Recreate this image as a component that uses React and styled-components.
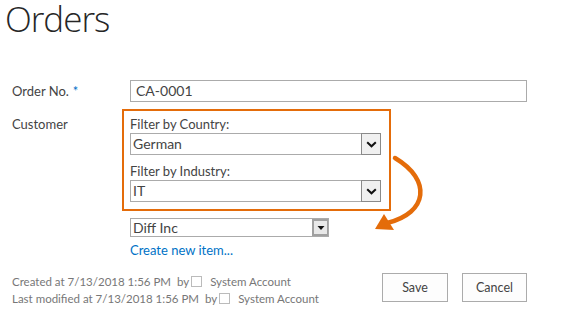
import React from "react";
import styled, { createGlobalStyle } from "styled-components";

const GlobalStyle = createGlobalStyle`
    html, body {
        margin: 0;
        padding: 0;
        background: #fff;
    }
    body {
        font-family: Lato, "Liberation Sans", sans-serif;
        color: #444;
    }
`;

const Page = styled.div`
    position: relative;
    width: 566px;
    min-height: 335px;
    padding: 1px 0 0 12px;
    box-sizing: border-box;
`;

const Title = styled.h1`
    margin: 0 0 0 -7px;
    font-family: "Open Sans", Lato, sans-serif;
    font-size: 35px;
    font-weight: 300;
    letter-spacing: -1px;
    line-height: 35px;
    color: #262626;
`;

const Form = styled.div`
    width: 515px;
    margin-top: 44px;
`;

const Row = styled.div`
    display: flex;
    align-items: flex-start;
    margin-top: ${p => p.gap || 0}px;
`;

const Label = styled.div`
    width: 118px;
    flex: none;
    font-size: 13px;
    line-height: ${p => p.lh || 22}px;
    padding-top: ${p => p.pt || 0}px;
    color: #444;
`;

const Required = styled.span`
    color: #0072c6;
    margin-left: 4px;
`;

const Field = styled.div`
    display: flex;
    flex-direction: column;
    align-items: flex-start;
`;

const TextInput = styled.div`
    width: 397px;
    height: 22px;
    box-sizing: border-box;
    border: 1px solid #ababab;
    padding: 0 5px;
    font-size: 14px;
    line-height: 20px;
    color: #444;
`;

const FilterBox = styled.div`
    margin-left: -8px;
    width: 269px;
    box-sizing: border-box;
    border: 2px solid #e46c0a;
    padding: 4px 8px 7px 6px;
`;

const FilterLabel = styled.div`
    font-size: 13px;
    line-height: ${p => p.lh}px;
    margin-top: ${p => p.gap || 0}px;
    color: #444;
`;

const Select = styled.div`
    display: flex;
    width: ${p => p.w}px;
    height: ${p => p.h}px;
    box-sizing: border-box;
    border: 1px solid #ababab;
    margin-top: ${p => p.gap || 0}px;
    font-size: 14px;
    color: #444;
`;

const SelectText = styled.div`
    flex: 1;
    padding-left: 2px;
    line-height: ${p => p.lh}px;
`;

const ChevronButton = styled.div`
    width: 20px;
    margin: -1px -1px -1px 0;
    box-sizing: border-box;
    border: 1px solid #8a8a8a;
    background: #f0f0f0;
    display: flex;
    align-items: center;
    justify-content: center;
`;

const ArrowButton = styled.div`
    width: 16px;
    box-sizing: border-box;
    border: 2px solid #a0a0a0;
    border-right-width: 1px;
    background: #e8e8e8;
    display: flex;
    align-items: center;
    justify-content: center;
`;

const CreateLink = styled.a`
    margin-top: 5px;
    font-size: 13px;
    line-height: 16px;
    color: #0072c6;
    text-decoration: none;
`;

const Footer = styled.div`
    display: flex;
    justify-content: space-between;
    align-items: flex-start;
    margin-top: 15px;
`;

const Meta = styled.div`
    font-size: 11.5px;
    line-height: 17px;
    color: #777;
`;

const MetaLine = styled.div`
    display: flex;
    align-items: center;
    white-space: pre;
`;

const UserBox = styled.span`
    display: inline-block;
    width: 9px;
    height: 9px;
    border: 1px solid #bbb;
    margin: 0 8px 0 2px;
`;

const Buttons = styled.div`
    display: flex;
    gap: 14px;
`;

const Button = styled.button`
    width: ${p => p.w}px;
    height: 29px;
    box-sizing: border-box;
    border: 1px solid #ababab;
    background: #fdfdfd;
    font-family: inherit;
    font-size: 12.5px;
    color: #444;
    padding: 0;
`;

const Annotation = styled.svg`
    position: absolute;
    left: 0;
    top: 0;
    pointer-events: none;
`;

const Chevron = () => (
    <svg width="11" height="7" viewBox="0 0 11 7">
        <path d="M1.2 1.2 L5.5 5.3 L9.8 1.2" fill="none" stroke="#111" strokeWidth="2" />
    </svg>
);

const Caret = () => (
    <svg width="8" height="4" viewBox="0 0 8 4">
        <path d="M0.5 0 L7.5 0 L4 4 Z" fill="#111" />
    </svg>
);

const App = () => (
    <Page>
        <GlobalStyle />
        <Title>Orders</Title>
        <Form>
            <Row>
                <Label>Order No.<Required>*</Required></Label>
                <TextInput>CA-0001</TextInput>
            </Row>
            <Row gap={7}>
                <Label lh={18} pt={6}>Customer</Label>
                <Field>
                    <FilterBox>
                        <FilterLabel lh={18}>Filter by Country:</FilterLabel>
                        <Select w={251} h={22}>
                            <SelectText lh={20}>German</SelectText>
                            <ChevronButton><Chevron /></ChevronButton>
                        </Select>
                        <FilterLabel lh={17} gap={8}>Filter by Industry:</FilterLabel>
                        <Select w={251} h={22}>
                            <SelectText lh={20}>IT</SelectText>
                            <ChevronButton><Chevron /></ChevronButton>
                        </Select>
                    </FilterBox>
                    <Select w={199} h={19} gap={7}>
                        <SelectText lh={17}>Diff Inc</SelectText>
                        <ArrowButton><Caret /></ArrowButton>
                    </Select>
                    <CreateLink href="#">Create new item...</CreateLink>
                </Field>
            </Row>
            <Footer>
                <Meta>
                    <MetaLine>Created at 7/13/2018 1:56 PM  by<UserBox />System Account</MetaLine>
                    <MetaLine>Last modified at 7/13/2018 1:56 PM  by<UserBox />System Account</MetaLine>
                </Meta>
                <Buttons>
                    <Button w={66}>Save</Button>
                    <Button w={65}>Cancel</Button>
                </Buttons>
            </Footer>
        </Form>
        <Annotation width="566" height="335">
            <path d="M395 158 C 432 180, 428 213, 387 223" fill="none" stroke="#e46c0a" strokeWidth="4.5" strokeLinecap="round" />
            <polygon points="375,229 384,214 394,230" fill="#e46c0a" />
        </Annotation>
    </Page>
);

export default App;
